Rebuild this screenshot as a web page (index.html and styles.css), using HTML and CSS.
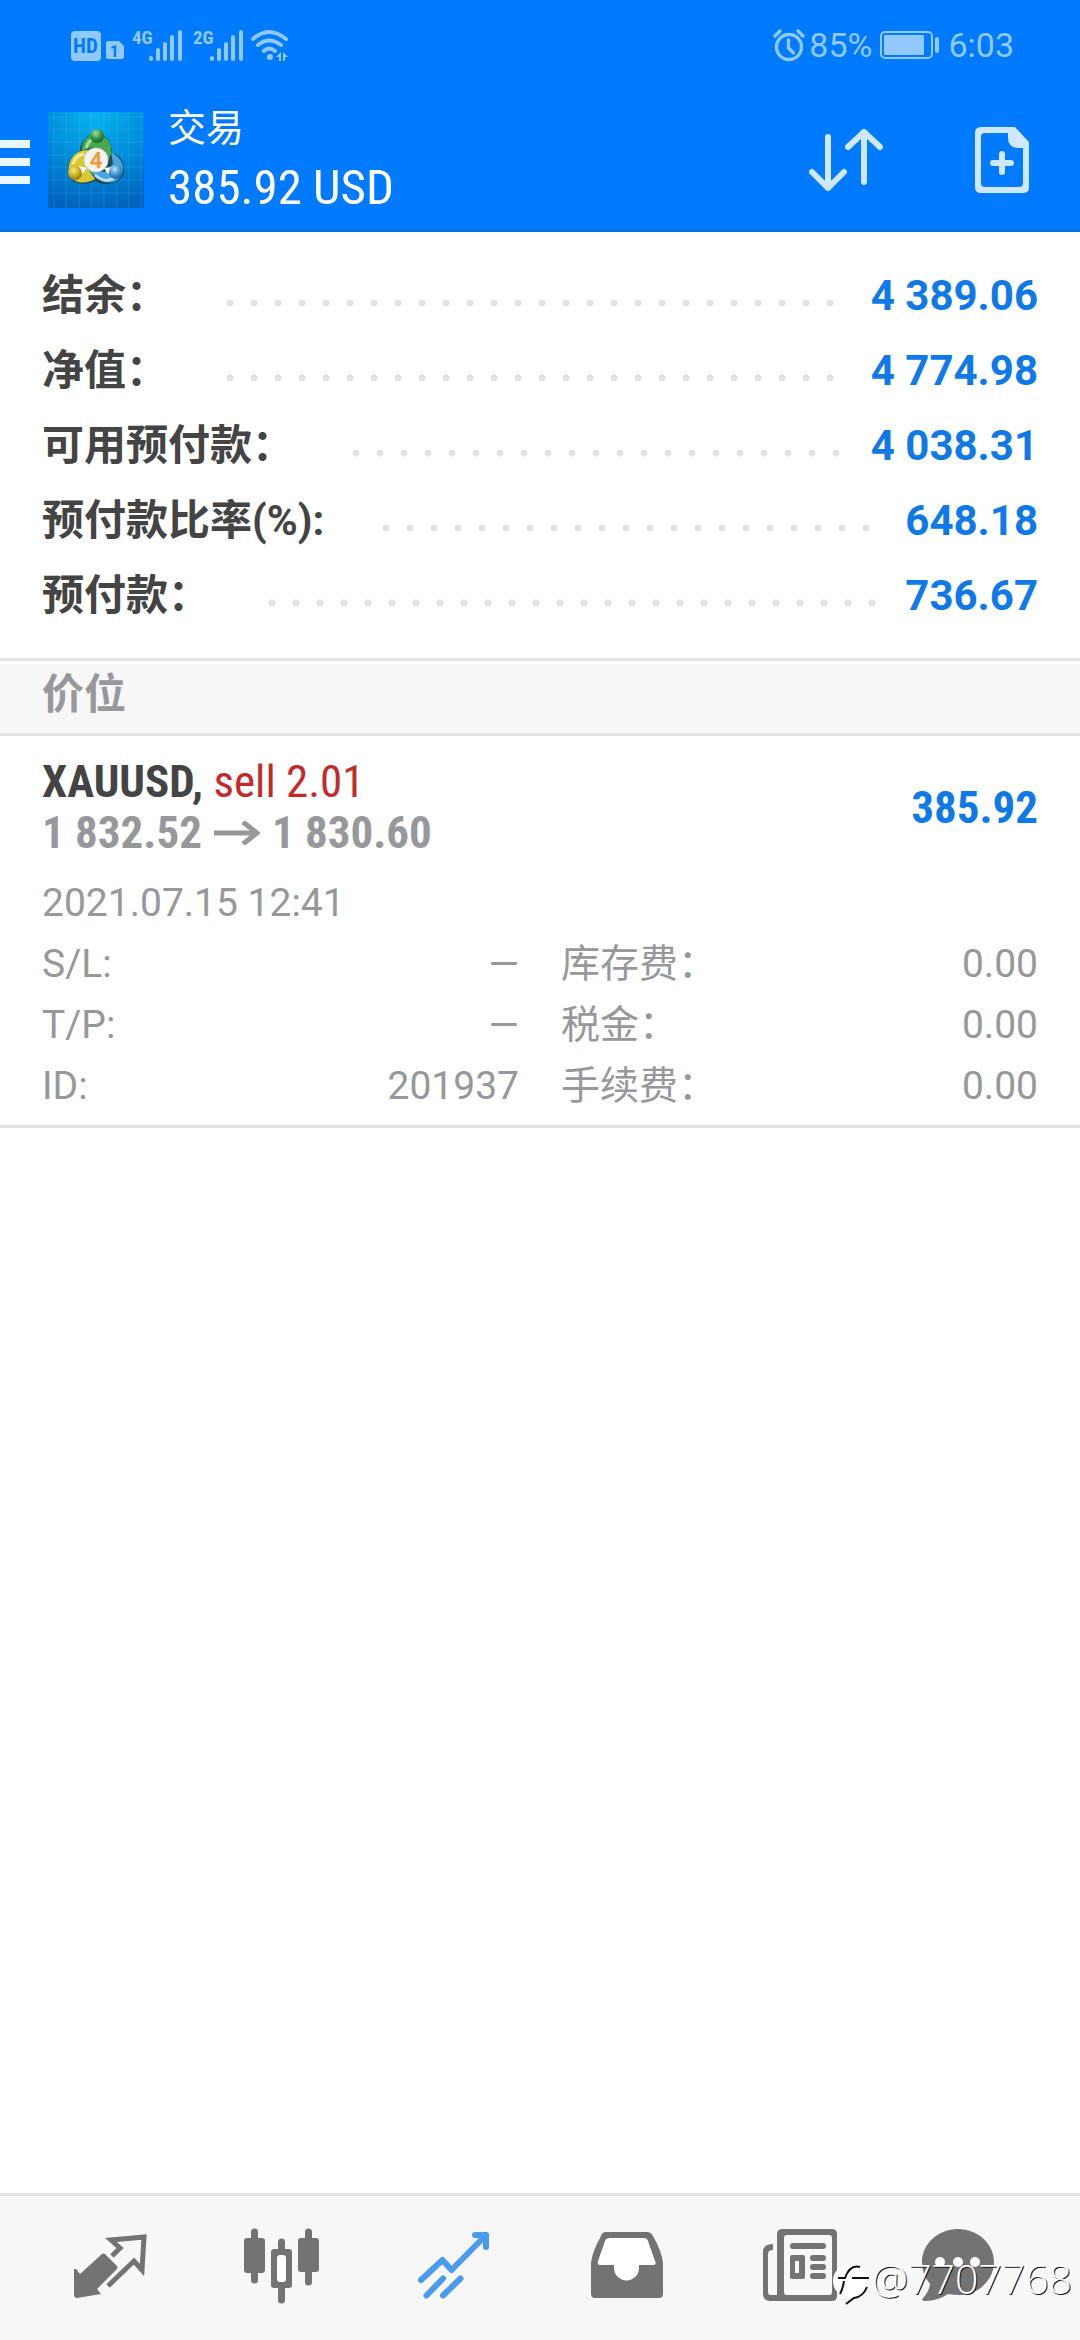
FILE: index.html
```html
<!DOCTYPE html>
<html lang="zh-CN">
<head>
<meta charset="utf-8">
<meta name="viewport" content="width=device-width, initial-scale=1">
<title>交易</title>
<link rel="stylesheet" href="styles.css">
</head>
<body>
<div class="app">
  <header class="top">
    <div class="status">
      <svg class="status-icons" width="220" height="36" viewBox="0 0 220 36" aria-hidden="true">
        <rect x="1" y="4" width="30" height="30" rx="4"/>
        <path d="M41 14h8l5 5v11q0 2-2 2H38q-2 0-2-2V16q0-2 2-2z"/>
        <g class="bars">
          <path d="M81 32v-1M88 32V23M95 32V17M102 32V10M110 32V5"/>
          <path d="M142 32v-1M149 32V23M156 32V17M163 32V10M171 32V5"/>
        </g>
        <g class="wave">
          <path d="M183 12q16-14 33 0M188 18q11-9 23 0M194 24q5-5 11 0"/>
        </g>
        <circle cx="200" cy="30" r="3"/>
        <path d="M206 30l5-5v9h-2v-4zM213 25l5 5-3 0v4h-2z"/>
        <text class="cut" x="3" y="26" font-size="21">HD</text>
        <text class="cut" x="40" y="30" font-size="17">1</text>
        <text class="net" x="62" y="17" font-size="19">4G</text>
        <text class="net" x="123" y="17" font-size="19">2G</text>
      </svg>
      <div class="status-right">
        <svg class="line-icon" width="32" height="34" viewBox="0 0 32 34" aria-hidden="true">
          <circle cx="16" cy="19" r="12.5" stroke-width="3.4"/>
          <path d="M15.5 12v8l5 5" stroke-width="3.4"/>
          <path d="M2 8l5-5M25 3l5 5" stroke-width="3.4"/>
        </svg>
        <span class="percent">85%</span>
        <svg class="battery" width="60" height="28" viewBox="0 0 60 28" aria-hidden="true">
          <rect class="shell" x="1" y="1" width="51" height="26" rx="4"/>
          <rect x="4" y="4" width="40" height="20" rx="1"/>
          <rect x="55" y="6" width="4" height="16" rx="2"/>
        </svg>
        <span>6:03</span>
      </div>
    </div>
    <div class="bar">
      <button class="menu" type="button" aria-label="菜单">
        <svg width="30" height="48" viewBox="0 0 30 48"><path d="M0 4h30v8H0zM0 22h30v8H0zM0 40h30v8H0z"/></svg>
      </button>
      <svg class="logo" width="96" height="96" viewBox="0 0 96 96" aria-hidden="true">
        <defs>
          <radialGradient id="sky" cx=".5" cy="0" r="1"><stop offset="0" stop-color="#08b4ee"/><stop offset=".5" stop-color="#0090dc"/><stop offset="1" stop-color="#0064bd"/></radialGradient>
          <radialGradient id="green" cx=".4" cy=".3" r=".7"><stop offset="0" stop-color="#a6e0a0"/><stop offset=".6" stop-color="#2f9440"/><stop offset="1" stop-color="#14662a"/></radialGradient>
          <radialGradient id="gold" cx=".4" cy=".3" r=".7"><stop offset="0" stop-color="#f6eb86"/><stop offset=".6" stop-color="#c9ac1e"/><stop offset="1" stop-color="#8c7810"/></radialGradient>
          <radialGradient id="blue" cx=".4" cy=".3" r=".7"><stop offset="0" stop-color="#b5e2fa"/><stop offset=".6" stop-color="#3a90cf"/><stop offset="1" stop-color="#1762a0"/></radialGradient>
        </defs>
        <rect width="96" height="96" fill="url(#sky)"/>
        <path d="M6 0v96M18 0v96M31 0v96M43 0v96M56 0v96M69 0v96M81 0v96M93 0v96M0 5h96M0 17h96M0 30h96M0 43h96M0 55h96M0 68h96M0 81h96" stroke="#5cc6f4" stroke-opacity=".22" fill="none"/>
        <path d="M48 22C38 22 31 32 32 42C22 42 18 54 21 64C24 72 36 74 47 69C57 75 72 72 76 62C77 50 72 42 64 41C64 30 58 22 48 22z" fill="#1d4d55"/>
        <path d="M34 39C33 28 42 21 49 22C61 24 67 36 61 47L52 55L45 35z" fill="#49a94f"/>
        <path d="M38 36q3-9 10-10" stroke="#a9dea0" stroke-width="3" fill="none"/>
        <path d="M40 38C26 38 19 49 21 62C26 73 39 72 47 67L38 54z" fill="#d8c832"/>
        <path d="M25 52q3-9 11-10" stroke="#f5ee9c" stroke-width="3" fill="none"/>
        <path d="M63 40C74 45 77 56 74 63C68 74 53 73 41 58L57 60L65 52z" fill="#4ca4df"/>
        <path d="M47 63q10 9 19 3" stroke="#b5e0f6" stroke-width="3" fill="none"/>
        <path d="M31 54l8 2-5 6zM56 56l8-1-4 7z" fill="#fff"/>
        <circle cx="49" cy="24" r="7" fill="url(#green)"/>
        <circle cx="27" cy="61" r="7" fill="url(#gold)"/>
        <circle cx="68" cy="60" r="7" fill="url(#blue)"/>
        <circle cx="48" cy="48" r="12" fill="#f4f4f4" stroke="#d3d3d3"/>
        <text class="logo-num" x="48" y="56" text-anchor="middle">4</text>
      </svg>
      <div class="titles">
        <h1>交易</h1>
        <p class="total">385.92 USD</p>
      </div>
      <button class="sort" type="button" aria-label="排序">
        <svg class="stroke-icon" width="74" height="64" viewBox="0 0 74 64"><path d="M19 9v51M3 44l16 16 16-16M55 54V4M39 19L55 4l16 15"/></svg>
      </button>
      <button class="new" type="button" aria-label="新订单">
        <svg class="doc-icon" width="54" height="66" viewBox="0 0 54 66"><path fill-rule="evenodd" d="M6 0H40L54 15V60Q54 66 48 66H6Q0 66 0 60V6Q0 0 6 0zM10 6Q6 6 6 10V56Q6 60 10 60H44Q48 60 48 56V21H42Q33 20 33 11V6z"/><path d="M27 27v18M18 36h18" stroke-width="6" stroke-linecap="round"/></svg>
      </button>
    </div>
  </header>

  <main>
    <dl class="summary">
      <div class="row"><dt>结余：</dt><dd>4 389.06</dd></div>
      <div class="row"><dt>净值：</dt><dd>4 774.98</dd></div>
      <div class="row"><dt>可用预付款：</dt><dd>4 038.31</dd></div>
      <div class="row"><dt>预付款比率(%):</dt><dd>648.18</dd></div>
      <div class="row"><dt>预付款：</dt><dd>736.67</dd></div>
    </dl>
    <h2 class="section">价位</h2>
    <article class="deal">
      <div class="deal-head">
        <div>
          <p class="symbol"><b>XAUUSD,</b> <span class="sell">sell 2.01</span></p>
          <p class="prices">1 832.52
            <svg width="46" height="24" viewBox="0 0 46 24" role="img" aria-label="至"><path d="M0 12h43M29 1l14 11-14 11"/></svg>
            1 830.60</p>
        </div>
        <p class="profit">385.92</p>
      </div>
      <p class="date">2021.07.15 12:41</p>
      <dl class="details">
        <div><dt>S/L:</dt><dd>—</dd></div>
        <div><dt>库存费：</dt><dd>0.00</dd></div>
        <div><dt>T/P:</dt><dd>—</dd></div>
        <div><dt>税金：</dt><dd>0.00</dd></div>
        <div><dt>ID:</dt><dd>201937</dd></div>
        <div><dt>手续费：</dt><dd>0.00</dd></div>
      </dl>
    </article>
  </main>

  <nav class="tabs">
    <a href="#quotes" aria-label="行情">
      <svg width="96" height="96" viewBox="0 0 96 96"><path class="fill" d="M40 34q1-1 3 0L55 46q1 1 0 3L35 69l4 5L15 78q-3 0-3-3V49l2 0 4 5z"/><path class="thin" d="M50 36l8-8-9-8 33-3-2 33-8-9-26 25"/></svg>
    </a>
    <a href="#charts" aria-label="图表">
      <svg width="96" height="96" viewBox="0 0 96 96"><path class="wick" d="M20.5 12v48M47.5 22v58M74.5 12v50"/><rect class="fill" x="10" y="18" width="21" height="35" rx="3"/><rect class="fill" x="64" y="18" width="21" height="34" rx="3"/><rect class="fill" x="37" y="29" width="21" height="39" rx="3"/><rect class="paper" x="43" y="35" width="9" height="27" rx="3"/></svg>
    </a>
    <a class="active" href="#trade" aria-label="交易" aria-current="page">
      <svg width="96" height="96" viewBox="0 0 96 96"><path class="trend" d="M15 60l21.5-20 9 10L80 15M69 15h11v12M20.5 75.5L37 58.5M37 75.5l17.5-17"/></svg>
    </a>
    <a href="#history" aria-label="历史">
      <svg width="96" height="96" viewBox="0 0 96 96"><path class="fill" d="M28 12H69q4 0 6 4Q84 32 85 43V74q0 4-4 4H17q-4 0-4-4V43Q14 32 23 16q1-4 5-4z"/><path class="paper" d="M32 18H66q3 0 4 3l7 20q2 4-2 4H61v3a12.5 12.5 0 0 1-25 0v-3H22q-3 0-2-4l7-20q1-3 5-3z"/></svg>
    </a>
    <a href="#news" aria-label="新闻">
      <svg width="96" height="96" viewBox="0 0 96 96"><path class="fill" fill-rule="evenodd" d="M33 9H82q5 0 5 5V76q0 5-5 5H20q-7 0-7-7V32q0-8 10-8v6q-5 0-5 4V72q0 3 3 3h6V14q0-5 6-5zM37 15q-3 0-3 3V72q0 3 3 3H79q3 0 3-3V18q0-3-3-3z"/><path class="fill" fill-rule="evenodd" d="M42 35h11q2 0 2 2v20q0 2-2 2H42q-2 0-2-2V37q0-2 2-2zM45 41v12h4V41z"/><path class="lines" d="M43 26h30M63 38h10M63 47h10M63 56h10"/></svg>
    </a>
    <a href="#messages" aria-label="消息">
      <svg width="96" height="96" viewBox="0 0 96 96"><path class="fill" d="M36 9C56 9 72 24 72 42S56 75 38 75q-7 0-12-1Q16 81 3 81q-4 0-2-3 6-6 7-14-8-9-8-22C0 24 16 9 36 9z"/><g class="paper"><circle cx="18" cy="42" r="5"/><circle cx="36" cy="42" r="5"/><circle cx="53" cy="42" r="5"/></g></svg>
    </a>
  </nav>
  <div class="mark">
    <svg width="38" height="54" viewBox="0 0 38 54" aria-hidden="true"><circle cx="18" cy="30" r="17" fill="#fff"/><path d="M8 43q3-6 4-13M6 27h7Q18 13 28 16M20 27h17M35 36Q31 46 22 47L14 53" fill="none" stroke="#111" stroke-width="2"/></svg>
    <span>@7707768</span>
  </div>
</div>
</body>
</html>
```
FILE: styles.css
```css
* { box-sizing: border-box; }

body, h1, h2, p, dl, dd { margin: 0; }

body {
  background: #fff;
  color: #444;
  font-family: Roboto, "Noto Sans CJK SC", sans-serif;
}

button {
  padding: 0;
  border: 0;
  background: none;
  cursor: pointer;
}

svg { display: block; flex: none; }

.app {
  position: relative;
  display: flex;
  flex-direction: column;
  min-height: 100vh;
}

main { flex: 1; }

/* Header */
.top {
  background: #007aff;
  border-bottom: 2px solid #0a6bd0;
  color: #fff;
}

.status {
  display: flex;
  justify-content: space-between;
  align-items: center;
  height: 90px;
  padding: 0 66px 0 70px;
  font-size: 34px;
  color: #8fc9ff;
}

.status-icons, .battery { fill: #8fc9ff; }
.status-icons .bars, .status-icons .wave {
  fill: none;
  stroke: #8fc9ff;
  stroke-width: 4;
  stroke-linecap: round;
}
.status-icons text { font-family: "Roboto Condensed", "Liberation Sans Narrow", Roboto, sans-serif; font-weight: 700; }
.status-icons .cut { fill: #007aff; }
.status-right { display: flex; align-items: center; }
.line-icon { fill: none; stroke: #8fc9ff; stroke-linecap: round; }
.percent { margin: 0 8px 0 4px; }
.battery { margin-right: 8px; }
.battery .shell { fill: none; stroke: #8fc9ff; stroke-width: 2; }

.bar {
  display: flex;
  align-items: center;
  height: 140px;
  padding-right: 51px;
}

.menu svg { fill: #e8f7ff; }
.logo { margin: 0 24px 0 18px; }
.logo-num { fill: #f29a3c; font-family: Roboto, sans-serif; font-size: 22px; font-weight: 700; }
.titles { flex: 1; }

h1 {
  font-size: 38px;
  line-height: 56px;
  font-weight: 400;
}

.total {
  font-family: "Roboto Condensed", "Liberation Sans Narrow", Roboto, sans-serif;
  font-size: 49px;
  line-height: 64px;
}

.stroke-icon {
  fill: none;
  stroke: #cfe7ff;
  stroke-width: 6;
  stroke-linecap: round;
  stroke-linejoin: round;
}
.sort { margin-right: 92px; }
.doc-icon { fill: #cfe7ff; stroke: #cfe7ff; stroke-width: 0; }

/* Account summary */
.summary {
  padding: 26px 42px 25px;
  border-bottom: 3px solid #e4e4e4;
}

.row {
  display: flex;
  align-items: baseline;
  height: 75px;
  font-size: 42px;
  font-weight: 700;
  line-height: 75px;
}

.row::before {
  content: "";
  order: 1;
  flex: 1;
  align-self: center;
  height: 8px;
  margin: 14px 24px 0 58px;
  background: radial-gradient(circle at 4px 4px, #e2e2e2 3px, transparent 4px) 0 0 / 24px 8px repeat-x;
}

.row dd { order: 2; color: #0f79ea; }

.section {
  height: 72px;
  margin-top: 3px;
  padding-left: 42px;
  border-bottom: 3px solid #e4e4e4;
  background: #f7f7f7;
  color: #97989b;
  font-size: 42px;
  font-weight: 700;
  line-height: 62px;
}

/* Open position */
.deal {
  padding: 20px 42px 8px;
  border-bottom: 3px solid #e4e4e4;
  color: #97989b;
  font-size: 39px;
}

.deal-head {
  display: flex;
  justify-content: space-between;
  align-items: center;
  font-family: "Roboto Condensed", "Liberation Sans Narrow", Roboto, sans-serif;
  font-size: 45px;
  line-height: 51px;
}

.symbol b { color: #444; }
.sell { color: #c52a2a; }
.prices { display: flex; align-items: center; gap: 12px; font-weight: 700; }
.prices svg { fill: none; stroke: #97989b; stroke-width: 5; }
.profit { color: #0f79ea; font-weight: 700; }

.date { margin-top: 14px; line-height: 62px; }

.details {
  display: grid;
  grid-template-columns: 1fr 1fr;
  column-gap: 42px;
}

.details div {
  display: flex;
  justify-content: space-between;
  height: 61px;
  line-height: 61px;
}

/* Bottom tabs */
.tabs {
  display: grid;
  grid-template-columns: repeat(6, 1fr);
  padding: 24px;
  border-top: 3px solid #e4e4e4;
  background: #f7f7f7;
}

.tabs a { display: flex; justify-content: center; color: #737373; }
.tabs .active { color: #4a9aee; }
.fill { fill: currentColor; }
.paper { fill: #fff; }
.thin, .wick, .trend, .lines { fill: none; stroke: currentColor; stroke-linejoin: round; }
.thin { stroke-width: 5; stroke-linejoin: miter; }
.wick { stroke-width: 7; stroke-linecap: round; }
.trend { stroke-width: 6; stroke-linecap: round; }
.lines { stroke-width: 6; stroke-linecap: round; }

/* Poster's mark, laid over the tabs */
.mark {
  position: absolute;
  right: 8px;
  bottom: 34px;
  display: flex;
  align-items: center;
  gap: 2px;
  color: #fff;
  font-family: "Open Sans", "Noto Sans", sans-serif;
  font-size: 41px;
  font-weight: 300;
  line-height: 56px;
  text-shadow: 1px 1px 0 #111;
  pointer-events: none;
}
```
